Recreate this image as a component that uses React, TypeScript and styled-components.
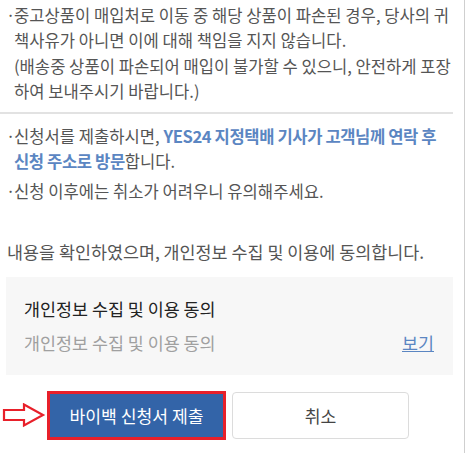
import React from 'react';
import styled, { createGlobalStyle } from 'styled-components';

const GlobalStyle = createGlobalStyle`
  html, body {
    margin: 0;
    padding: 0;
    background: #fff;
  }
  body {
    font-family: "Noto Sans CJK KR", "Noto Sans", sans-serif;
  }
`;

function ArrowMark() {
  return (
    <ArrowBox>
      <svg width="44" height="26" viewBox="0 0 44 26">
        <path
          d="M2 7 H22 V1.5 L41 12 L22 22.5 V17 H2 Z"
          fill="#fff"
          stroke="#e8202a"
          strokeWidth="2.2"
          strokeLinejoin="miter"
        />
      </svg>
    </ArrowBox>
  );
}

export default function App() {
  return (
    <Page>
      <GlobalStyle />
      <Section>
        <Item>
          중고상품이 매입처로 이동 중 해당 상품이 파손된 경우, 당사의 귀<br />
          책사유가 아니면 이에 대해 책임을 지지 않습니다.<br />
          (배송중 상품이 파손되어 매입이 불가할 수 있으니, 안전하게 포장<br />
          하여 보내주시기 바랍니다.)
        </Item>
      </Section>
      <Divider />
      <Section>
        <Item>
          신청서를 제출하시면, <Strong>YES24 지정택배 기사가 고객님께 연락 후<br />신청 주소로 방문</Strong>합니다.
        </Item>
        <Item>신청 이후에는 취소가 어려우니 유의해주세요.</Item>
      </Section>
      <Agree>내용을 확인하였으며, 개인정보 수집 및 이용에 동의합니다.</Agree>
      <ConsentBox>
        <ConsentTitle>개인정보 수집 및 이용 동의</ConsentTitle>
        <ConsentRow>
          <ConsentLabel>개인정보 수집 및 이용 동의</ConsentLabel>
          <ViewLink>보기</ViewLink>
        </ConsentRow>
      </ConsentBox>
      <Actions>
        <ArrowMark />
        <Highlight>
          <Button primary>바이백 신청서 제출</Button>
        </Highlight>
        <Button>취소</Button>
      </Actions>
    </Page>
  );
}

const Page = styled.div`
  width: 464px;
  height: 453px;
  border-right: 1px solid #cfcfcf;
  box-sizing: content-box;
  overflow: hidden;
  color: #555;
  font-size: 16.6px;
`;
const Section = styled.ul`
  list-style: none;
  margin: 0;
  padding: 3px 6px 0 0;
  display: flex;
  flex-direction: column;
  gap: 4px;
`;
const Item = styled.li`
  position: relative;
  padding-left: 14px;
  line-height: 25.3px;
  white-space: nowrap;

  &::before {
    content: '·';
    position: absolute;
    left: 6px;
    top: 0;
  }
`;
const Strong = styled.b`
  color: #5b86c2;
  font-weight: 700;
  letter-spacing: -0.4px;
`;
const Divider = styled.hr`
  width: 453px;
  margin: 8px 0 7px;
  border: 0;
  border-top: 2px solid #e2e2e2;
`;
const Agree = styled.p`
  margin: 35px 0 0 7px;
  font-size: 17.4px;
  line-height: 25px;
`;
const ConsentBox = styled.div`
  width: 447px;
  margin: 13px 0 0 6px;
  padding: 19px 18px 20px;
  box-sizing: border-box;
  background: #f7f7f7;
  font-size: 17.4px;
  display: flex;
  flex-direction: column;
  gap: 9px;
`;
const ConsentTitle = styled.div`
  color: #222;
  line-height: 25px;
`;
const ConsentRow = styled.div`
  display: flex;
  justify-content: space-between;
  align-items: center;
  line-height: 25px;
`;
const ConsentLabel = styled.span`
  color: #a0a0a0;
`;
const ViewLink = styled.a`
  color: #5b86c2;
  text-decoration: underline;
  margin-right: 1px;
  cursor: pointer;
`;
const Actions = styled.div`
  display: flex;
  align-items: center;
  margin-top: 16px;
  padding-left: 2px;
`;
const ArrowBox = styled.div`
  width: 45px;
  height: 26px;
  display: flex;
`;
const Highlight = styled.div`
  border: 3px solid #e8202a;
  display: flex;
`;
const Button = styled.button<{ primary?: boolean }>`
  font-family: inherit;
  font-size: 17.2px;
  width: ${p => (p.primary ? '173px' : '177px')};
  height: ${p => (p.primary ? '43px' : '47px')};
  margin-left: ${p => (p.primary ? '0' : '6px')};
  border: ${p => (p.primary ? '0' : '1px solid #dcdcdc')};
  border-radius: ${p => (p.primary ? '0' : '4px')};
  background: ${p => (p.primary ? '#3364a8' : '#fff')};
  color: ${p => (p.primary ? '#fff' : '#444')};
  cursor: pointer;
`;
